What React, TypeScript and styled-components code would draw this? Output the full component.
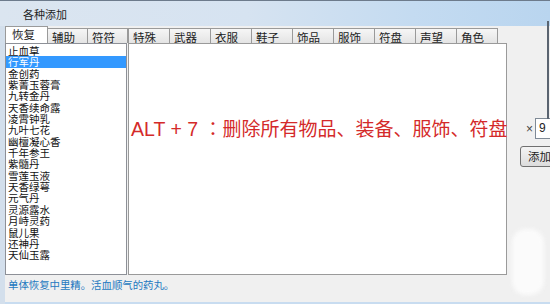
import React from 'react';
import styled, { createGlobalStyle } from 'styled-components';

const GlobalStyle = createGlobalStyle`
  html, body {
    margin: 0;
    padding: 0;
    background: #f0f0f0;
  }
  body {
    font-family: "Noto Sans CJK SC", "Liberation Sans", sans-serif;
  }
`;

const Window = styled.div`
  position: relative;
  width: 550px;
  height: 304px;
  overflow: hidden;
  display: flex;
  flex-direction: column;
  background: #d3dfec;
  border-top: 1px solid #6d7b8c;
  box-sizing: border-box;
`;

const TitleBar = styled.div`
  height: 25px;
  flex: none;
  display: flex;
  align-items: center;
  padding-left: 23px;
  font-size: 11px;
  color: #1e1e1e;
  background: linear-gradient(90deg, #dbe5f0 0%, #d6e3f1 45%, #c4dbf1 75%, #b9d5ef 100%);
`;

const Body = styled.div`
  flex: 1;
  display: flex;
  flex-direction: column;
  margin-left: 5px;
  background: #f0f0f0;
`;

const MainRow = styled.div`
  display: flex;
  height: 249px;
`;

const LeftPane = styled.div`
  width: 126px;
  display: flex;
  flex-direction: column;
`;

const RightPane = styled.div`
  width: 379px;
  margin-left: 1px;
  display: flex;
  flex-direction: column;
`;

const TabRow = styled.div`
  height: 17px;
  display: flex;
  align-items: flex-end;
`;

const Tab = styled.div<{ $active?: boolean; $w?: number }>`
  box-sizing: border-box;
  width: ${(p) => p.$w || 42}px;
  height: ${(p) => (p.$active ? 17 : 15)}px;
  padding-left: ${(p) => (p.$active ? 6 : 4)}px;
  padding-top: ${(p) => (p.$active ? 0 : 1)}px;
  font-size: 11.5px;
  line-height: 14px;
  color: #222;
  border: 1px solid #9a9a9a;
  border-bottom: none;
  background: ${(p) =>
    p.$active ? '#ffffff' : 'linear-gradient(#f6f6f6, #e4e4e4)'};
  margin-right: -1px;
`;

const ListBox = styled.div`
  flex: 1;
  background: #fff;
  border: 1px solid #8d9097;
  padding-top: 1px;
  overflow: hidden;
`;

const ListItem = styled.div<{ $selected?: boolean }>`
  height: 11.35px;
  line-height: 11.35px;
  padding-left: 2px;
  font-size: 10.5px;
  white-space: nowrap;
  color: ${(p) => (p.$selected ? '#fff' : '#111')};
  background: ${(p) => (p.$selected ? '#3399ff' : 'transparent')};
`;

const Content = styled.div`
  flex: 1;
  background: #fff;
  border: 1px solid #9a9a9a;
  padding: 72px 0 0 2px;
`;

const Notice = styled.div`
  font-size: 19px;
  line-height: 24px;
  color: #d42a2a;
  white-space: nowrap;
`;

const Hotkey = styled.span`
  font-family: "Liberation Sans", Arial, sans-serif;
  font-size: 19.5px;
`;

const Colon = styled.span`
  font-family: "Noto Sans CJK JP", sans-serif;
`;

const Side = styled.div`
  flex: 1;
  display: flex;
  flex-direction: column;
  align-items: flex-start;
  padding: 92px 0 0 19px;
`;

const CountRow = styled.div`
  display: flex;
  align-items: center;
  gap: 2px;
  font-size: 12px;
  color: #444;
  font-family: "Liberation Sans", Arial, sans-serif;
`;

const CountInput = styled.div`
  box-sizing: border-box;
  width: 20px;
  height: 21px;
  border: 1px solid #7f8a96;
  background: #fff;
  padding-left: 3px;
  font-size: 12px;
  line-height: 19px;
  color: #222;
`;

const AddButton = styled.div`
  box-sizing: border-box;
  margin: 7px 0 0 -6px;
  width: 40px;
  height: 21px;
  border: 1px solid #707070;
  border-radius: 3px;
  background: linear-gradient(#f4f4f4, #dcdcdc);
  padding-left: 7px;
  font-size: 11.5px;
  line-height: 19px;
  color: #222;
`;

const StatusBar = styled.div`
  flex: 1;
  padding: 3px 0 0 3px;
  font-size: 10.4px;
  line-height: 14px;
  color: #2479c0;
  white-space: nowrap;
  border-bottom: 2px solid #c8dcf0;
`;

const EdgeLine = styled.div`
  position: absolute;
  right: 1px;
  top: 20px;
  width: 2px;
  height: 98px;
  background: #5a6470;
`;

const Smudge = styled.div`
  position: absolute;
  left: 512px;
  top: 228px;
  width: 32px;
  height: 66px;
  border-radius: 14px;
  background: #fbfbfb;
  filter: blur(2px);
`;

const items = [
  '止血草', '行军丹', '金创药', '紫菁玉蓉膏', '九转金丹', '天香续命露',
  '凌霄钟乳', '九叶七花', '幽檀凝心香', '千年参王', '紫髓丹', '雪莲玉液',
  '天香绿萼', '元气丹', '灵源露水', '月峙灵药', '鼠儿果', '还神丹', '天仙玉露',
];

const leftTabs = ['恢复', '辅助', '符符'];
const rightTabs = ['特殊', '武器', '衣服', '鞋子', '饰品', '服饰', '符盘', '声望', '角色'];

export default function App() {
  return (
    <>
      <GlobalStyle />
      <Window>
        <TitleBar>各种添加</TitleBar>
        <Body>
          <MainRow>
            <LeftPane>
              <TabRow>
                {leftTabs.map((t, i) => (
                  <Tab key={t} $active={i === 0} $w={i === 0 ? 43 : 41}>
                    {t}
                  </Tab>
                ))}
              </TabRow>
              <ListBox>
                {items.map((it, i) => (
                  <ListItem key={it} $selected={i === 1}>
                    {it}
                  </ListItem>
                ))}
              </ListBox>
            </LeftPane>
            <RightPane>
              <TabRow>
                {rightTabs.map((t) => (
                  <Tab key={t}>{t}</Tab>
                ))}
              </TabRow>
              <Content>
                <Notice>
                  <Hotkey>ALT + 7 </Hotkey>
                  <Colon>：</Colon>删除所有物品、装备、服饰、符盘
                </Notice>
              </Content>
            </RightPane>
            <Side>
              <CountRow>
                ×<CountInput>9</CountInput>
              </CountRow>
              <AddButton>添加</AddButton>
            </Side>
          </MainRow>
          <StatusBar>单体恢复中里精。活血顺气的药丸。</StatusBar>
        </Body>
        <EdgeLine />
        <Smudge />
      </Window>
    </>
  );
}
